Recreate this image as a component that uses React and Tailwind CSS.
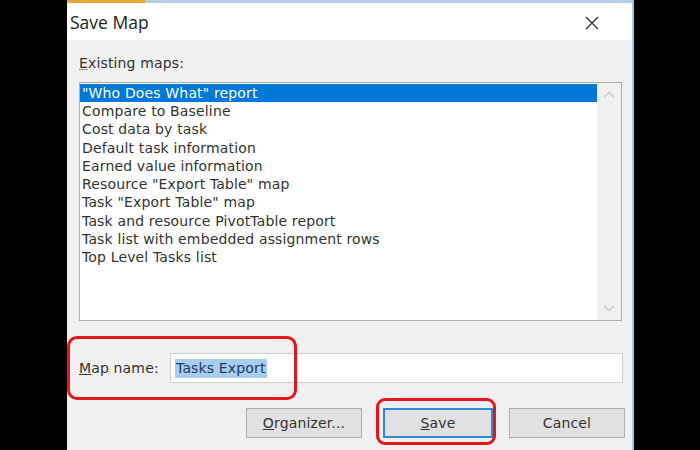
import React from "react";

const items = [
  '"Who Does What" report',
  "Compare to Baseline",
  "Cost data by task",
  "Default task information",
  "Earned value information",
  'Resource "Export Table" map',
  'Task "Export Table" map',
  "Task and resource PivotTable report",
  "Task list with embedded assignment rows",
  "Top Level Tasks list",
];

export default function App() {
  const font = { fontFamily: '"DejaVu Sans", Tahoma, sans-serif' };
  return (
    <div className="w-[700px] h-[450px] bg-black flex overflow-hidden relative" style={font}>
      <div className="w-[67px] shrink-0" />
      <div className="w-[567px] h-[450px] flex flex-col bg-[#f0f0f0] border-r-2 border-[#a9c4e0]">
        <div className="h-[3px] flex shrink-0">
          <div className="w-[78px] bg-[#e8a93a]" />
          <div className="flex-1 bg-[#b8cce0]" />
        </div>
        <div className="h-[37px] bg-white flex items-center justify-between pl-[3px] pr-[33px] pt-[2px] shrink-0">
          <span className="text-[17.5px] text-[#222]" style={{ fontFamily: '"Open Sans", "Noto Sans", sans-serif' }}>Save Map</span>
          <svg width="14" height="14" viewBox="0 0 14 14">
            <path d="M1 1 L13 13 M13 1 L1 13" stroke="#333" strokeWidth="1.4" />
          </svg>
        </div>
        <div className="flex flex-col pl-[12px] text-[14px] tracking-[0.15px] text-[#333]">
          <div className="h-[42px] flex items-center pt-[4px]">
            <span><span className="underline decoration-[#999]">E</span>xisting maps:</span>
          </div>
          <div className="h-[239px] w-[543px] bg-white border border-[#adadad] flex">
            <div className="flex-1 flex flex-col pt-[1px]">
              {items.map((t, i) => (
                <div
                  key={i}
                  className={
                    "h-[18.3px] flex items-center pl-[2px] whitespace-nowrap " +
                    (i === 0 ? "bg-[#0078d7] text-white" : "")
                  }
                >
                  {t}
                </div>
              ))}
            </div>
            <div className="w-[24px] bg-[#f0f0f0] flex flex-col justify-between items-center py-[8px]">
              <svg width="12" height="8" viewBox="0 0 12 8"><path d="M1 6 L6 1.5 L11 6" stroke="#c8c8c8" strokeWidth="1.4" fill="none" /></svg>
              <svg width="12" height="8" viewBox="0 0 12 8"><path d="M1 2 L6 6.5 L11 2" stroke="#c8c8c8" strokeWidth="1.4" fill="none" /></svg>
            </div>
          </div>
          <div className="h-[32px]" />
          <div className="flex items-center h-[30px] w-[544px]">
            <span className="w-[91px]"><span className="underline">M</span>ap name:</span>
            <div className="flex-1 h-[30px] bg-white border border-[#d0d0d0] flex items-center pl-[4px]">
              <span className="bg-[#a8cdee] text-[#1a3a5c] px-[1px] leading-[19px]">Tasks Export</span>
            </div>
          </div>
          <div className="h-[25px]" />
          <div className="flex h-[30px] pl-[167px]">
            <div className="w-[116px] h-[30px] bg-[#e1e1e1] border border-[#adadad] flex items-center justify-center"><span><span className="underline">O</span>rganizer...</span></div>
            <div className="w-[110px] h-[30px] ml-[21px] bg-[#e1e1e1] border-2 border-[#2c8ad8] flex items-center justify-center"><span><span className="underline">S</span>ave</span></div>
            <div className="w-[116px] h-[30px] ml-[16px] bg-[#e1e1e1] border border-[#adadad] flex items-center justify-center">Cancel</div>
          </div>
        </div>
      </div>
      <div className="absolute left-[67px] top-[336px] w-[230px] h-[64px] border-[3px] border-[#e8141c] rounded-[10px]" />
      <div className="absolute left-[376px] top-[398px] w-[120px] h-[47px] border-[3px] border-[#e8141c] rounded-[9px]" />
    </div>
  );
}
